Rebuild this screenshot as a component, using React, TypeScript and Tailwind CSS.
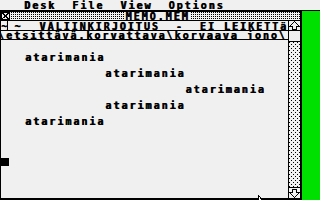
import React from 'react';

const dots2 =
  'bg-[conic-gradient(from_270deg_at_1px_1px,#000_90deg,transparent_0)] bg-[length:2px_2px]';
const dots4 =
  'bg-[conic-gradient(from_270deg_at_1px_1px,#000_90deg,transparent_0),conic-gradient(from_270deg_at_1px_1px,#000_90deg,transparent_0)] bg-[length:4px_4px] bg-[position:0_0,2px_2px]';

const Arrow = ({ down = false }: { down?: boolean }) => (
  <svg width="11" height="9" viewBox="0 0 11 9" shapeRendering="crispEdges" className={down ? 'rotate-180' : ''}>
    <polygon points="5.5,0.5 10.5,5.5 7.5,5.5 7.5,8.5 3.5,8.5 3.5,5.5 0.5,5.5" fill="#f0f0f0" stroke="#000" strokeWidth="1" />
  </svg>
);

const lines = [
  '   atarimania',
  '             atarimania',
  '                       atarimania',
  '             atarimania',
  '   atarimania',
];

export default function App() {
  return (
    <div className="relative w-[320px] h-[200px] overflow-hidden bg-[#f0f0f0] text-black font-['DejaVu_Sans_Mono',monospace] font-bold text-[10px] tracking-[2px] [text-shadow:0.6px_0_0_#000]">
      {/* Menu bar */}
      <div className="h-[10px] overflow-hidden whitespace-pre leading-[12px]">   Desk  File  View  Options</div>
      <div className="h-px bg-black" />

      <div className="flex h-[189px]">
        {/* Window */}
        <div className="flex w-[300px] flex-col border-l border-t border-black">
          {/* Title bar */}
          <div className="flex h-[9px] border-b border-black">
            <div className="w-[10px]">
              <svg width="10" height="8" viewBox="0 0 10 8" shapeRendering="crispEdges">
                <rect x="0.5" y="0.5" width="8" height="7" fill="#f0f0f0" stroke="#000" />
                <path d="M1 1 L8 7 M8 1 L1 7" stroke="#000" strokeWidth="1.2" />
              </svg>
            </div>
            <div className={`flex flex-1 justify-center ${dots2}`}>
              <span className="ml-[4px] h-[8px] overflow-hidden bg-[#f0f0f0] leading-[10px]">MEMO.MEM</span>
            </div>
          </div>

          <div className="flex flex-1">
            {/* Text column */}
            <div className="flex w-[287px] flex-col">
              <div className="flex h-[10px] overflow-hidden whitespace-pre border-b border-black leading-[11px]">
                <div className="w-[10px] overflow-hidden border-r border-black tracking-[-1px]">~1</div>
                <span className="pl-[6px]">~</span>
                <span className="ml-[17px]">VÄLIINKIRJOITUS  -  EI LEIKETTä</span>
              </div>
              <div className="h-[9px] overflow-hidden whitespace-pre border-b border-black leading-[10px]">
                <span className="ml-[-3px]">\etsittävä.korvattava\korvaava jono\</span>
              </div>
              <div className="flex-1 whitespace-pre pt-[14px]">
                {lines.map((l, i) => (
                  <div key={i} className="h-[16px] leading-[8px]">{l}</div>
                ))}
                <div className="mt-[24px] h-[8px] w-[8px] bg-black" />
              </div>
            </div>

            {/* Scrollbar */}
            <div className="flex w-[12px] flex-col border-l border-black">
              <div className="flex h-[10px] justify-center border-b border-black">
                <Arrow />
              </div>
              <div className="h-[11px] border-b border-black" />
              <div className={`flex-1 ${dots4}`} />
              <div className="flex h-[11px] items-end justify-center border-t border-black">
                <Arrow down />
              </div>
            </div>
          </div>
          <div className="h-[2px] bg-black" />
        </div>
        <div className="w-[2px] bg-black" />
        <div className="flex-1 bg-[#00e000]" />
      </div>

      {/* Mouse pointer tip */}
      <svg className="absolute left-[258px] top-[195px]" width="6" height="5" viewBox="0 0 6 5" shapeRendering="crispEdges">
        <polygon points="0.5,0.5 0.5,5 4.5,5" fill="#fff" stroke="#000" />
      </svg>
    </div>
  );
}
